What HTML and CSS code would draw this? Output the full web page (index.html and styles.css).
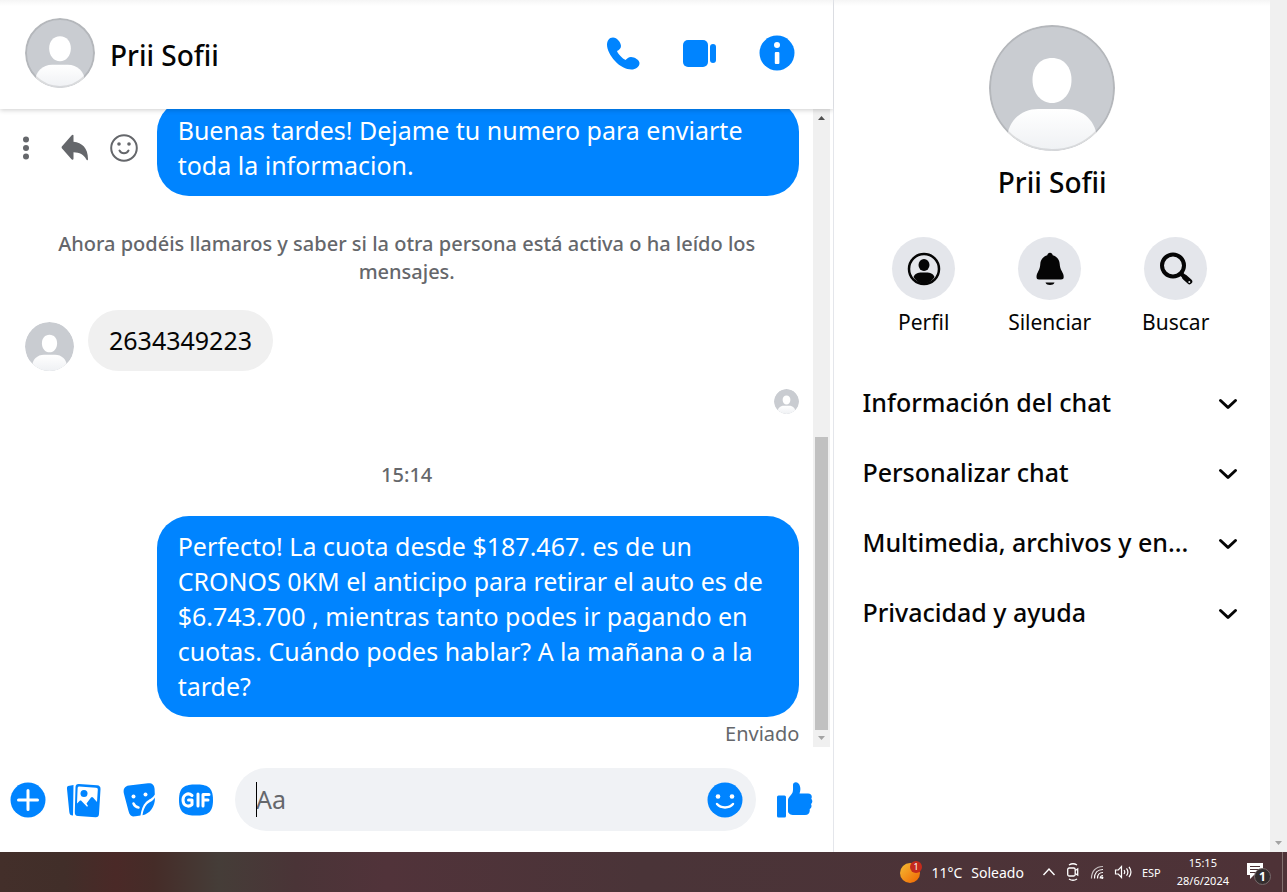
FILE: index.html
```html
<!DOCTYPE html>
<html lang="es">
<head>
<meta charset="utf-8">
<meta name="viewport" content="width=device-width, initial-scale=1">
<title>Prii Sofii</title>
<link rel="stylesheet" href="styles.css">
</head>
<body>
<svg class="defs" aria-hidden="true">
  <defs>
    <linearGradient id="shoulders" x1="0" y1="0" x2="0" y2="1">
      <stop offset="0" stop-color="#fff"/><stop offset="1" stop-color="#eef0f3"/>
    </linearGradient>
    <clipPath id="round"><circle cx="63" cy="63" r="63"/></clipPath>
    <symbol id="person" viewBox="0 0 126 126">
      <g clip-path="url(#round)">
        <rect width="126" height="126" fill="#c9ccd1"/>
        <path d="M63 33c12 0 19.500 9 19.500 22S74 78 63 78s-19.500-10-19.500-23S51 33 63 33z" fill="#fff"/>
        <path d="M18 116c0-20 14-32 31-32h28c17 0 31 12 31 32v12H18z" fill="url(#shoulders)"/>
      </g>
    </symbol>
    <symbol id="chevron" viewBox="0 0 20 12"><path d="M2.500 2.500 10 9.500l7.500-7" fill="none" stroke="#050505" stroke-width="3" stroke-linecap="round" stroke-linejoin="round"/></symbol>
  </defs>
</svg>
<div class="app">
  <main class="chat">
    <header class="chat-header">
      <svg class="avatar avatar-md ringed"><use href="#person"/></svg>
      <h1 class="chat-name">Prii Sofii</h1>
      <div class="call-actions">
        <button class="icon-btn" aria-label="Llamar"><svg width="36" height="36" viewBox="0 0 36 36"><path d="M8 2.500C4 2.500 2 6 2 9.500c0 5 3 11 8 16.500 5 5.500 11 8.500 16.500 8.500 4 0 8-2.500 8-6.500 0-3-5-6-8.500-6-2.500 0-4 1.500-5.500 3-3-1.500-7.500-6-8.500-9 2-1 4-2.500 4-5 0-3.500-4-8.500-8-8.500z" fill="#0084ff"/></svg></button>
        <button class="icon-btn" aria-label="Videollamada"><svg width="36" height="36" viewBox="0 0 36 36"><rect x="1" y="5" width="25" height="27" rx="5" fill="#0084ff"/><rect x="28" y="9" width="6" height="19" rx="3" fill="#0084ff"/></svg></button>
        <button class="icon-btn" aria-label="Información"><svg width="36" height="36" viewBox="0 0 36 36"><circle cx="18" cy="18" r="17.500" fill="#0084ff"/><circle cx="18" cy="10" r="3" fill="#fff"/><rect x="15.800" y="17" width="4.600" height="12" rx="1" fill="#fff"/></svg></button>
      </div>
    </header>
    <div class="conversation">
      <section class="messages" aria-label="Mensajes">
        <div class="row row-out">
          <div class="tools">
            <button class="icon-btn more" aria-label="Más"><svg width="8" height="24" viewBox="0 0 8 24" fill="#65676b"><circle cx="4" cy="3.500" r="3"/><circle cx="4" cy="12" r="3"/><circle cx="4" cy="20.500" r="3"/></svg></button>
            <button class="icon-btn" aria-label="Responder"><svg width="28" height="28" viewBox="0 0 28 28"><path d="M12.500 1.500v6.200C21 8.500 27 14 27 25c0 1.500-1.200 1.600-1.800.3-2.500-5-6.500-7-12.700-7.100v6.300c0 1.200-1.200 1.600-2 .8L1.500 15c-1.200-1.200-1.200-2.200 0-3.300l9-10.200c.8-.9 2-.8 2 0z" fill="#65676b"/></svg></button>
            <button class="icon-btn" aria-label="Reaccionar"><svg width="28" height="28" viewBox="0 0 28 28" fill="none" stroke="#65676b"><circle cx="14" cy="14" r="12.800" stroke-width="2"/><path d="M9.500 16.500c2 3.600 7 3.600 9 0" stroke-width="2" stroke-linecap="round"/><circle cx="9" cy="10" r="1.800" fill="#65676b" stroke="none"/><circle cx="19" cy="10" r="1.800" fill="#65676b" stroke="none"/></svg></button>
          </div>
          <p class="bubble bubble-out">Buenas tardes! Dejame tu numero para enviarte toda la informacion.</p>
        </div>
        <p class="notice">Ahora podéis llamaros y saber si la otra persona está activa o ha leído los mensajes.</p>
        <div class="row row-in">
          <svg class="avatar avatar-sm"><use href="#person"/></svg>
          <p class="bubble bubble-in">2634349223</p>
        </div>
        <div class="row row-seen"><svg class="avatar avatar-xs"><use href="#person"/></svg></div>
        <time class="stamp">15:14</time>
        <div class="row row-out">
          <p class="bubble bubble-out">Perfecto! La cuota desde $187.467. es de un CRONOS 0KM el anticipo para retirar el auto es de $6.743.700 , mientras tanto podes ir pagando en cuotas. Cuándo podes hablar? A la mañana o a la tarde?</p>
        </div>
        <p class="status">Enviado</p>
      </section>
      <div class="scrollbar" aria-hidden="true">
        <svg width="17" height="17" viewBox="0 0 17 17"><path d="M5 11 8.500 7l3.500 4z" fill="#505050"/></svg>
        <div class="track"><div class="thumb"></div></div>
        <svg width="17" height="17" viewBox="0 0 17 17"><path d="M5 6l3.500 4L12 6z" fill="#a3a3a3"/></svg>
      </div>
    </div>
    <form class="composer">
      <div class="composer-tools">
      <button type="button" class="icon-btn" aria-label="Más acciones"><svg width="36" height="36" viewBox="0 0 36 36"><circle cx="18" cy="18" r="17.500" fill="#0084ff"/><path d="M18 8.500v19M8.500 18h19" stroke="#fff" stroke-width="3" stroke-linecap="round"/></svg></button>
      <button type="button" class="icon-btn" aria-label="Foto"><svg width="36" height="36" viewBox="0 0 36 36"><path d="M2 4 7.500 3 7 33.500c-2.500 0-3.500-1-3.700-3.500L1 7c-.1-1.500.2-2.700 1-3z" fill="#0084ff"/><path d="M13 2l18 1.200c2.500.2 3.700 1.500 3.500 4L33 32c-.2 2.300-1.300 3.300-3.500 3.200L12 34c-2.300-.2-3.300-1.500-3.200-3.800L9.500 5c.1-2.200 1.300-3.200 3.500-3z" fill="#0084ff"/><path d="m13 4.500 17 1.200c1.300.1 2 .8 1.800 2L31 20l-4-4.500c-.7-.7-1.300-.7-2 0l-4.500 6L22 24l-1 .8L15.500 19c-.6-.6-1.400-.5-2 0l-2.500 2.500.6-15c.1-1.300.4-2 1.400-2z" fill="#fff"/><circle cx="18" cy="11.500" r="3.500" fill="#0084ff"/></svg></button>
      <button type="button" class="icon-btn" aria-label="Sticker"><svg width="36" height="36" viewBox="0 0 36 36"><path d="M7 3.500 26 1.200c4-.4 6.300 1.600 6.600 5.800l.2 5.500c-2 4-5.800 4.500-8.800 7.500-3.500 3.500-4.500 8-5.500 13.500l-5 .8C10 35 7.500 33.500 6.500 29L2 12C.8 7 2.500 4.200 7 3.500z" fill="#0084ff"/><path d="M33 15.500C33 25 28 31.500 20.500 33.300c.5-4.500 2-8 4.500-11 2.500-2.500 6-3 8-6.800z" fill="#0084ff"/><circle cx="11.500" cy="14.500" r="2" fill="#fff"/><circle cx="23.500" cy="12.500" r="2" fill="#fff"/><path d="M11.500 21.500c1 2.500 2.500 3.700 5 4" stroke="#fff" stroke-width="2.500" fill="none" stroke-linecap="round"/></svg></button>
      <button type="button" class="icon-btn" aria-label="GIF"><svg width="36" height="36" viewBox="0 0 36 36"><path d="M18 2.500c11 0 17 2 17 15.500s-6 15.500-17 15.500S1 31.500 1 18 7 2.500 18 2.500z" fill="#0084ff"/><path d="M14 13.500c-4-3.500-9-.7-9 4.500s5 8 9 4.500V18h-3.500M20 12v12M25 24V12.500h6M25 18h5" stroke="#fff" stroke-width="3" fill="none" stroke-linecap="round" stroke-linejoin="round"/></svg></button>
      </div>
      <div class="field">
        <span class="caret" aria-hidden="true"></span>
        <input class="field-input" type="text" placeholder="Aa" aria-label="Mensaje">
        <button type="button" class="icon-btn" aria-label="Emoji"><svg width="36" height="36" viewBox="0 0 36 36"><circle cx="18" cy="18" r="17.500" fill="#0084ff"/><circle cx="11" cy="14.500" r="2.300" fill="#fff"/><circle cx="25" cy="14.500" r="2.300" fill="#fff"/><path d="M10 22c4 4.600 12 4.600 16 0" stroke="#fff" stroke-width="2.400" fill="none" stroke-linecap="round"/></svg></button>
      </div>
      <button type="button" class="icon-btn" aria-label="Me gusta"><svg width="36" height="36" viewBox="0 0 36 36" fill="#0084ff"><rect x="0" y="13.500" width="9" height="22" rx="1.500"/><path d="M16 3c0-3 3.500-3.500 5.500-1.500S24 8 22.500 11.500H31c3.500 0 4.500 3 3.300 5.300 1.500 1.500 1.300 4-.3 5.200 1 2 .5 4-1.300 5 .5 4-1.200 6-4.700 6H17c-3.500 0-6-1.500-6-4V18c0-3 4-5 4.700-8 .5-2.300.3-4.500.3-7z"/></svg></button>
    </form>
  </main>
  <aside class="details">
    <svg class="avatar avatar-lg ringed"><use href="#person"/></svg>
    <h2 class="chat-name">Prii Sofii</h2>
    <div class="shortcuts">
      <button class="shortcut"><span class="disc"><svg width="34" height="34" viewBox="0 0 34 34"><circle cx="17" cy="17" r="15" fill="none" stroke="#050505" stroke-width="2.500"/><ellipse cx="17" cy="13" rx="5.500" ry="6" fill="#050505"/><path d="M6.500 25c1.500-3.500 4.500-4.500 8-4.500h5c3.500 0 6.500 1 8 4.500-2.500 4-6 6.500-10.500 6.500S9 29 6.500 25z" fill="#050505"/></svg></span>Perfil</button>
      <button class="shortcut"><span class="disc"><svg width="34" height="34" viewBox="0 0 34 34" fill="#050505"><path d="M17 .8c1.500 0 2.500 1 2.700 2.400 4.300 1.300 6.800 4.300 7 8.800.2 3 .8 4.800 2 7 1.300 2.300 2 4 2 6 0 1.800-1 2.500-2.700 2.500H6c-1.700 0-2.500-.8-2.500-2.500 0-2 .7-3.700 1.900-6 1.200-2.200 1.700-4 1.900-7 .3-4.500 2.800-7.500 7-8.800C14.500 1.800 15.500.8 17 .8z"/><path d="M12.500 30.500h9c-.7 1.800-2.300 2.500-4.500 2.500s-3.800-.7-4.500-2.500z"/></svg></span>Silenciar</button>
      <button class="shortcut"><span class="disc"><svg width="34" height="34" viewBox="0 0 34 34" fill="none" stroke="#050505"><circle cx="14" cy="13.500" r="11" stroke-width="4"/><path d="m22.500 22 3.500 3.500" stroke-width="4"/><path d="m26 25.500 4.500 4" stroke-width="5.500" stroke-linecap="round"/><circle cx="30.300" cy="30" r="1" fill="#e4e6eb" stroke="none"/></svg></span>Buscar</button>
    </div>
    <nav class="sections">
      <button class="section-btn"><span>Información del chat</span><svg class="chevron"><use href="#chevron"/></svg></button>
      <button class="section-btn"><span>Personalizar chat</span><svg class="chevron"><use href="#chevron"/></svg></button>
      <button class="section-btn"><span>Multimedia, archivos y en...</span><svg class="chevron"><use href="#chevron"/></svg></button>
      <button class="section-btn"><span>Privacidad y ayuda</span><svg class="chevron"><use href="#chevron"/></svg></button>
    </nav>
  </aside>
  <div class="page-scroll" aria-hidden="true"><svg width="17" height="17" viewBox="0 0 17 17"><path d="M5 6l3.500 4L12 6z" fill="#a3a3a3"/></svg></div>
</div>
<footer class="taskbar">
  <button class="task weather"><svg width="22" height="24" viewBox="0 0 22 24"><defs><linearGradient id="sun" x1="0" y1="0" x2="1" y2="1"><stop offset="0" stop-color="#f4bd35"/><stop offset="1" stop-color="#f06400"/></linearGradient></defs><circle cx="10" cy="13" r="10" fill="url(#sun)"/><circle cx="16" cy="7" r="6" fill="#c42b1c"/><text x="16" y="10" class="sun-count">1</text></svg><span>11°C</span><span>Soleado</span></button>
  <button class="task" aria-label="Mostrar iconos ocultos"><svg width="14" height="20" viewBox="0 0 14 20"><path d="m1.500 13 5.500-6 5.500 6" stroke="#fff" stroke-width="1.400" fill="none"/></svg></button>
  <button class="task" aria-label="Reunirse"><svg width="14" height="20" viewBox="0 0 14 20" fill="none" stroke="#fff" stroke-width="1.300"><path d="M3 3c2.500-1.600 5.500-1.600 8 0M3 17c2.500 1.600 5.500 1.600 8 0"/><rect x="1.700" y="6" width="7.500" height="8" rx="1.500"/><path d="m9.200 8.500 2.500-1.500v6L9.200 11.500"/></svg></button>
  <button class="task" aria-label="Wi-Fi"><svg width="14" height="20" viewBox="0 0 14 20" fill="none" stroke="#fff" stroke-width="1.200"><path d="M1.500 16.500C1.500 9 6 4.500 13 4.500" opacity=".7"/><path d="M4.500 16.500c0-5.500 3-9 8.500-9M7.500 16.500c0-3.500 2-6 5.500-6"/><path d="M10.200 16.500c0-2 1-3 2.800-3"/><circle cx="12.200" cy="15.800" r="1.200" fill="#fff" stroke="none"/></svg></button>
  <button class="task" aria-label="Volumen"><svg width="18" height="20" viewBox="0 0 18 20" fill="none" stroke="#fff" stroke-width="1.200"><path d="M1.500 8h2.800L7.500 4.500v11L4.300 12H1.500zM10 8c1 1.300 1 2.700 0 4M12.500 6.300c1.800 2.400 1.800 5 0 7.400M15 4.800c2.400 3.200 2.400 7.200 0 10.400"/></svg></button>
  <button class="task lang">ESP</button>
  <button class="task clock"><time>15:15</time><time>28/6/2024</time></button>
  <button class="task" aria-label="Notificaciones"><svg width="26" height="26" viewBox="0 0 26 26"><path d="M1 4h16v12H8l-4 4v-4H1z" fill="#fff"/><path d="M4 7.500h10M4 10.500h10M4 13.500h6" stroke="#4c3236" stroke-width="1"/><circle cx="16.500" cy="17.500" r="8" fill="#332d2e" stroke="#77696b" stroke-width="1"/><text x="16.500" y="22" class="note-count">1</text></svg></button>
  <span class="desktop-edge"></span>
</footer>
</body>
</html>
```
FILE: styles.css
```css
* { box-sizing: border-box; }
body {
  margin: 0;
  height: 100vh;
  display: flex;
  flex-direction: column;
  overflow: hidden;
  background: #fff;
  color: #050505;
  font-family: "Noto Sans", "Open Sans", sans-serif;
}
h1, h2, p { margin: 0; }
button {
  border: 0;
  padding: 0;
  background: none;
  color: inherit;
  font: inherit;
}
svg { display: block; flex: none; }
.defs { position: absolute; width: 0; height: 0; }

.app {
  flex: 1;
  min-height: 0;
  display: grid;
  grid-template-columns: minmax(0, 21fr) minmax(0, 11fr) 17px;
  background: linear-gradient(#f5f5f5, #fff 6px);
}
.chat {
  display: flex;
  flex-direction: column;
  min-height: 0;
}
.chat-header {
  flex: none;
  display: flex;
  align-items: center;
  gap: 15px;
  height: 109px;
  padding: 0 38px 3px 25px;
  box-shadow: 0 1px 5px rgba(0, 0, 0, .2);
  clip-path: inset(0 0 -8px 0);
  z-index: 1;
}
.chat-name { font-size: 28px; line-height: 40px; font-weight: 500; }
.chat-header .chat-name { padding-top: 4px; }
.call-actions { display: flex; gap: 41px; margin-left: auto; }

.avatar { border-radius: 50%; }
.avatar-lg { width: 126px; height: 126px; }
.avatar-md { width: 70px; height: 70px; }
.avatar-sm { width: 49px; height: 49px; }
.avatar-xs { width: 25px; height: 25px; }
.ringed { outline: 2px solid rgba(0, 0, 0, .1); outline-offset: -2px; }

.conversation { flex: 1; min-height: 0; display: flex; padding-right: 3px; }
.messages {
  flex: 1;
  min-width: 0;
  display: flex;
  flex-direction: column;
  justify-content: flex-end;
  overflow: hidden;
}
.row { display: flex; flex: none; padding: 0 14px 0 25px; }
.row-out { justify-content: flex-end; align-items: center; }
.row-in { align-items: flex-end; gap: 14px; margin-top: 24px; }
.row-seen { justify-content: flex-end; margin-top: 18px; }
.tools {
  flex: 1;
  display: flex;
  align-items: center;
  justify-content: flex-end;
  gap: 21px;
  padding-right: 19px;
}
.more { margin-right: 10px; }
.bubble { padding: 13px 21px; border-radius: 32px; font-size: 25px; line-height: 35px; }
.bubble-out { flex: none; width: 83%; background: #0084ff; color: #fff; }
.bubble-in { background: #f0f0f0; }
.notice, .stamp {
  align-self: center;
  flex: none;
  color: #65676b;
  font-size: 20px;
  line-height: 28px;
  font-weight: 500;
  text-align: center;
}
.notice { margin-top: 34px; padding: 0 42px; }
.stamp { margin: 47px 0 27px; }
.status {
  align-self: flex-end;
  flex: none;
  padding: 4px 14px 0 0;
  color: #65676b;
  font-size: 20px;
  line-height: 26px;
}

.scrollbar { width: 17px; display: flex; flex-direction: column; background: #f0f0f0; }
.track { flex: 1; display: flex; align-items: flex-end; padding: 0 2px; }
.thumb { width: 100%; height: 48.5%; background: #c1c1c1; }

.composer { flex: none; display: flex; align-items: center; gap: 21px; padding: 21px 20px 21px 10px; }
.composer-tools { display: flex; gap: 20px; }
.field {
  position: relative;
  flex: 1;
  min-width: 0;
  display: flex;
  align-items: center;
  height: 63px;
  padding: 0 13px 0 21px;
  border-radius: 32px;
  background: #f0f2f5;
}
.field-input {
  flex: 1;
  min-width: 0;
  padding: 0;
  border: 0;
  outline: 0;
  background: none;
  font: inherit;
  font-size: 25px;
  line-height: 35px;
}
.field-input::placeholder { color: #65676b; opacity: 1; }
.caret { position: absolute; left: 21px; top: 14px; width: 1px; height: 35px; background: #000; }

.details {
  display: flex;
  flex-direction: column;
  align-items: center;
  min-width: 0;
  padding: 25px 28px 0;
  border-left: 1px solid #e4e6eb;
}
.details .chat-name { margin-top: 11px; }
.shortcuts { display: flex; margin: 35px 5px 0 0; }
.shortcut { width: 126px; display: flex; flex-direction: column; align-items: center; gap: 8px; font-size: 21px; line-height: 28px; }
.disc { width: 63px; height: 63px; display: grid; place-items: center; border-radius: 50%; background: #e4e6eb; }
.sections { width: 100%; margin-top: 32px; }
.section-btn {
  width: 100%;
  height: 70px;
  display: flex;
  align-items: center;
  justify-content: space-between;
  font-size: 25px;
  line-height: 35px;
  font-weight: 500;
  text-align: left;
}
.section-btn span { padding-bottom: 2px; white-space: nowrap; }
.chevron { width: 20px; height: 12px; margin: 2px 4px 0 0; }
.page-scroll { display: flex; align-items: flex-end; background: #f0f0f0; }

.taskbar {
  flex: none;
  height: 40px;
  display: flex;
  align-items: center;
  justify-content: flex-end;
  gap: 10px;
  padding-right: 4px;
  color: #fff;
  font-size: 14px;
  background: linear-gradient(90deg, #432f2a 0, #412e29 5%, #4a2927 9%, #452c28 12%, #453d38 17%, #4a3437 23%, #51333a 30%, #4a3438 50%, #4e3237 100%);
}
.task { display: flex; align-items: center; }
.weather { gap: 9px; margin-right: 8px; }
.lang { font-size: 11px; }
.clock { flex-direction: column; font-size: 11px; line-height: 18px; margin: 0 7px 0 6px; }
.desktop-edge { width: 1px; height: 40px; background: #82706f; }
.sun-count { font-size: 9px; fill: #fff; text-anchor: middle; }
.note-count { font-size: 12px; font-weight: 700; fill: #fff; text-anchor: middle; }
```
